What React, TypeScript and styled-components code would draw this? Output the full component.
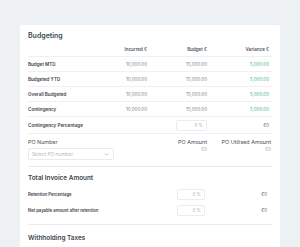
import React from "react";
import styled, { createGlobalStyle } from "styled-components";

const GlobalStyle = createGlobalStyle`
  html, body {
    margin: 0;
    padding: 0;
    background: #eef1f4;
    font-family: Inter, "Liberation Sans", Arial, sans-serif;
    overflow: hidden;
  }
`;

interface BudgetRow {
  label: string;
  incurred: string;
  budget: string;
  variance: string;
}

const rows: BudgetRow[] = [
  { label: "Budget MTD", incurred: "10,000.00", budget: "15,000.00", variance: "5,000.00" },
  { label: "Budgeted YTD", incurred: "10,000.00", budget: "15,000.00", variance: "5,000.00" },
  { label: "Overall Budgeted", incurred: "10,000.00", budget: "15,000.00", variance: "5,000.00" },
  { label: "Contingency", incurred: "10,000.00", budget: "15,000.00", variance: "5,000.00" },
];

function App() {
  return (
    <>
      <GlobalStyle />
      <Page>
        <Card>
          <SectionTitle>Budgeting</SectionTitle>
          <Row $height={14}>
            <span />
            <HeadCell>Incurred €</HeadCell>
            <HeadCell>Budget €</HeadCell>
            <HeadCell>Variance €</HeadCell>
          </Row>
          {rows.map((row) => (
            <Row key={row.label} $height={15}>
              <Label>{row.label}</Label>
              <Value>{row.incurred}</Value>
              <Value>{row.budget}</Value>
              <Value $green>{row.variance}</Value>
            </Row>
          ))}
          <Row $height={17}>
            <Label>Contingency Percentage</Label>
            <span />
            <InputCell>
              <PercentInput>0 %</PercentInput>
            </InputCell>
            <Value $dark>€0</Value>
          </Row>

          <PoBlock>
            <PoField>
              <FieldLabel>PO Number</FieldLabel>
              <Select>
                <span>Select PO number</span>
                <svg width="5" height="5" viewBox="0 0 10 10" fill="none">
                  <path d="M2 3.5 5 6.5 8 3.5" stroke="#9aa1a8" strokeWidth="1.2" strokeLinecap="round" strokeLinejoin="round" />
                </svg>
              </Select>
            </PoField>
            <PoAmount>
              <FieldLabel>PO Amount</FieldLabel>
              <SmallValue>€0</SmallValue>
            </PoAmount>
            <PoAmount>
              <FieldLabel>PO Utilised Amount</FieldLabel>
              <SmallValue>€0</SmallValue>
            </PoAmount>
          </PoBlock>

          <Section>
            <SubTitle>Total Invoice Amount</SubTitle>
            <PlainRow>
              <SmallLabel>Retention Percentage</SmallLabel>
              <span />
              <InputCell>
                <PercentInput $width={28}>0 %</PercentInput>
              </InputCell>
              <Value $dark>€0</Value>
            </PlainRow>
            <PlainRow>
              <SmallLabel>Net payable amount after retention</SmallLabel>
              <span />
              <InputCell>
                <PercentInput $width={28}>0 %</PercentInput>
              </InputCell>
              <Value $dark>€0</Value>
            </PlainRow>
          </Section>

          <LastSection>
            <SubTitle>Withholding Taxes</SubTitle>
          </LastSection>
        </Card>
      </Page>
    </>
  );
}

export default App;

const Page = styled.div`
  width: 300px;
  height: 247px;
  padding: 25px 20px 0;
  box-sizing: border-box;
  display: flex;
  flex-direction: column;
  overflow: hidden;
`;

const Card = styled.div`
  flex: 1;
  background: #ffffff;
  border-radius: 2px 2px 0 0;
  padding: 4px 8px 0;
  box-sizing: border-box;
  overflow: hidden;
`;

const SectionTitle = styled.div`
  height: 14px;
  line-height: 14px;
  font-size: 7px;
  font-weight: 600;
  color: #40464e;
`;

const Row = styled.div<{ $height: number }>`
  display: grid;
  grid-template-columns: minmax(0, 1fr) 60px 60px 62px;
  align-items: center;
  height: ${({ $height }) => $height}px;
  box-sizing: border-box;
  padding-right: 3px;
  border-bottom: 1px solid #eef0f2;
`;

const PlainRow = styled.div`
  display: grid;
  grid-template-columns: minmax(0, 1fr) 60px 60px 62px;
  align-items: center;
  height: 14px;
  padding-right: 5px;
`;

const HeadCell = styled.div`
  text-align: right;
  font-size: 4.5px;
  font-weight: 600;
  color: #50565e;
`;

const Label = styled.div`
  font-size: 4.6px;
  font-weight: 600;
  color: #3e444c;
  white-space: nowrap;
`;

const SmallLabel = styled(Label)`
  font-size: 4.2px;
`;

const Value = styled.div<{ $green?: boolean; $dark?: boolean }>`
  text-align: right;
  font-size: 4.5px;
  color: ${({ $green, $dark }) => ($green ? "#45b583" : $dark ? "#60656c" : "#7a7f86")};
`;

const InputCell = styled.div`
  display: flex;
  justify-content: flex-end;
`;

const PercentInput = styled.div<{ $width?: number }>`
  width: ${({ $width }) => $width ?? 31}px;
  height: 11px;
  box-sizing: border-box;
  border: 1px solid #eaecef;
  border-radius: 2px;
  padding-right: 3px;
  display: flex;
  align-items: center;
  justify-content: flex-end;
  font-size: 4.5px;
  color: #a9aeb4;
`;

const PoBlock = styled.div`
  display: grid;
  grid-template-columns: minmax(0, 1fr) 60px 64px;
  align-items: start;
  padding: 5px 1px 6px 0;
  border-bottom: 1px solid #e8eaed;
`;

const PoField = styled.div`
  display: flex;
  flex-direction: column;
  gap: 2px;
`;

const FieldLabel = styled.div`
  font-size: 5.4px;
  line-height: 7px;
  color: #4a5058;
  white-space: nowrap;
`;

const Select = styled.div`
  width: 86px;
  height: 12px;
  box-sizing: border-box;
  border: 1px solid #e8eaed;
  border-radius: 2px;
  padding: 0 4px 0 3px;
  display: flex;
  align-items: center;
  justify-content: space-between;
  font-size: 4.8px;
  color: #b3b8be;
`;

const PoAmount = styled.div`
  display: flex;
  flex-direction: column;
  align-items: flex-end;
  gap: 1px;
`;

const SmallValue = styled.div`
  font-size: 4.5px;
  color: #a9aeb4;
`;

const Section = styled.div`
  padding: 4px 0 7px;
  border-bottom: 1px solid #e8eaed;
  display: flex;
  flex-direction: column;
  gap: 2px;
`;

const SubTitle = styled.div`
  height: 14px;
  line-height: 14px;
  font-size: 6.4px;
  font-weight: 600;
  color: #40464e;
`;

const LastSection = styled.div`
  padding-top: 6px;
`;
